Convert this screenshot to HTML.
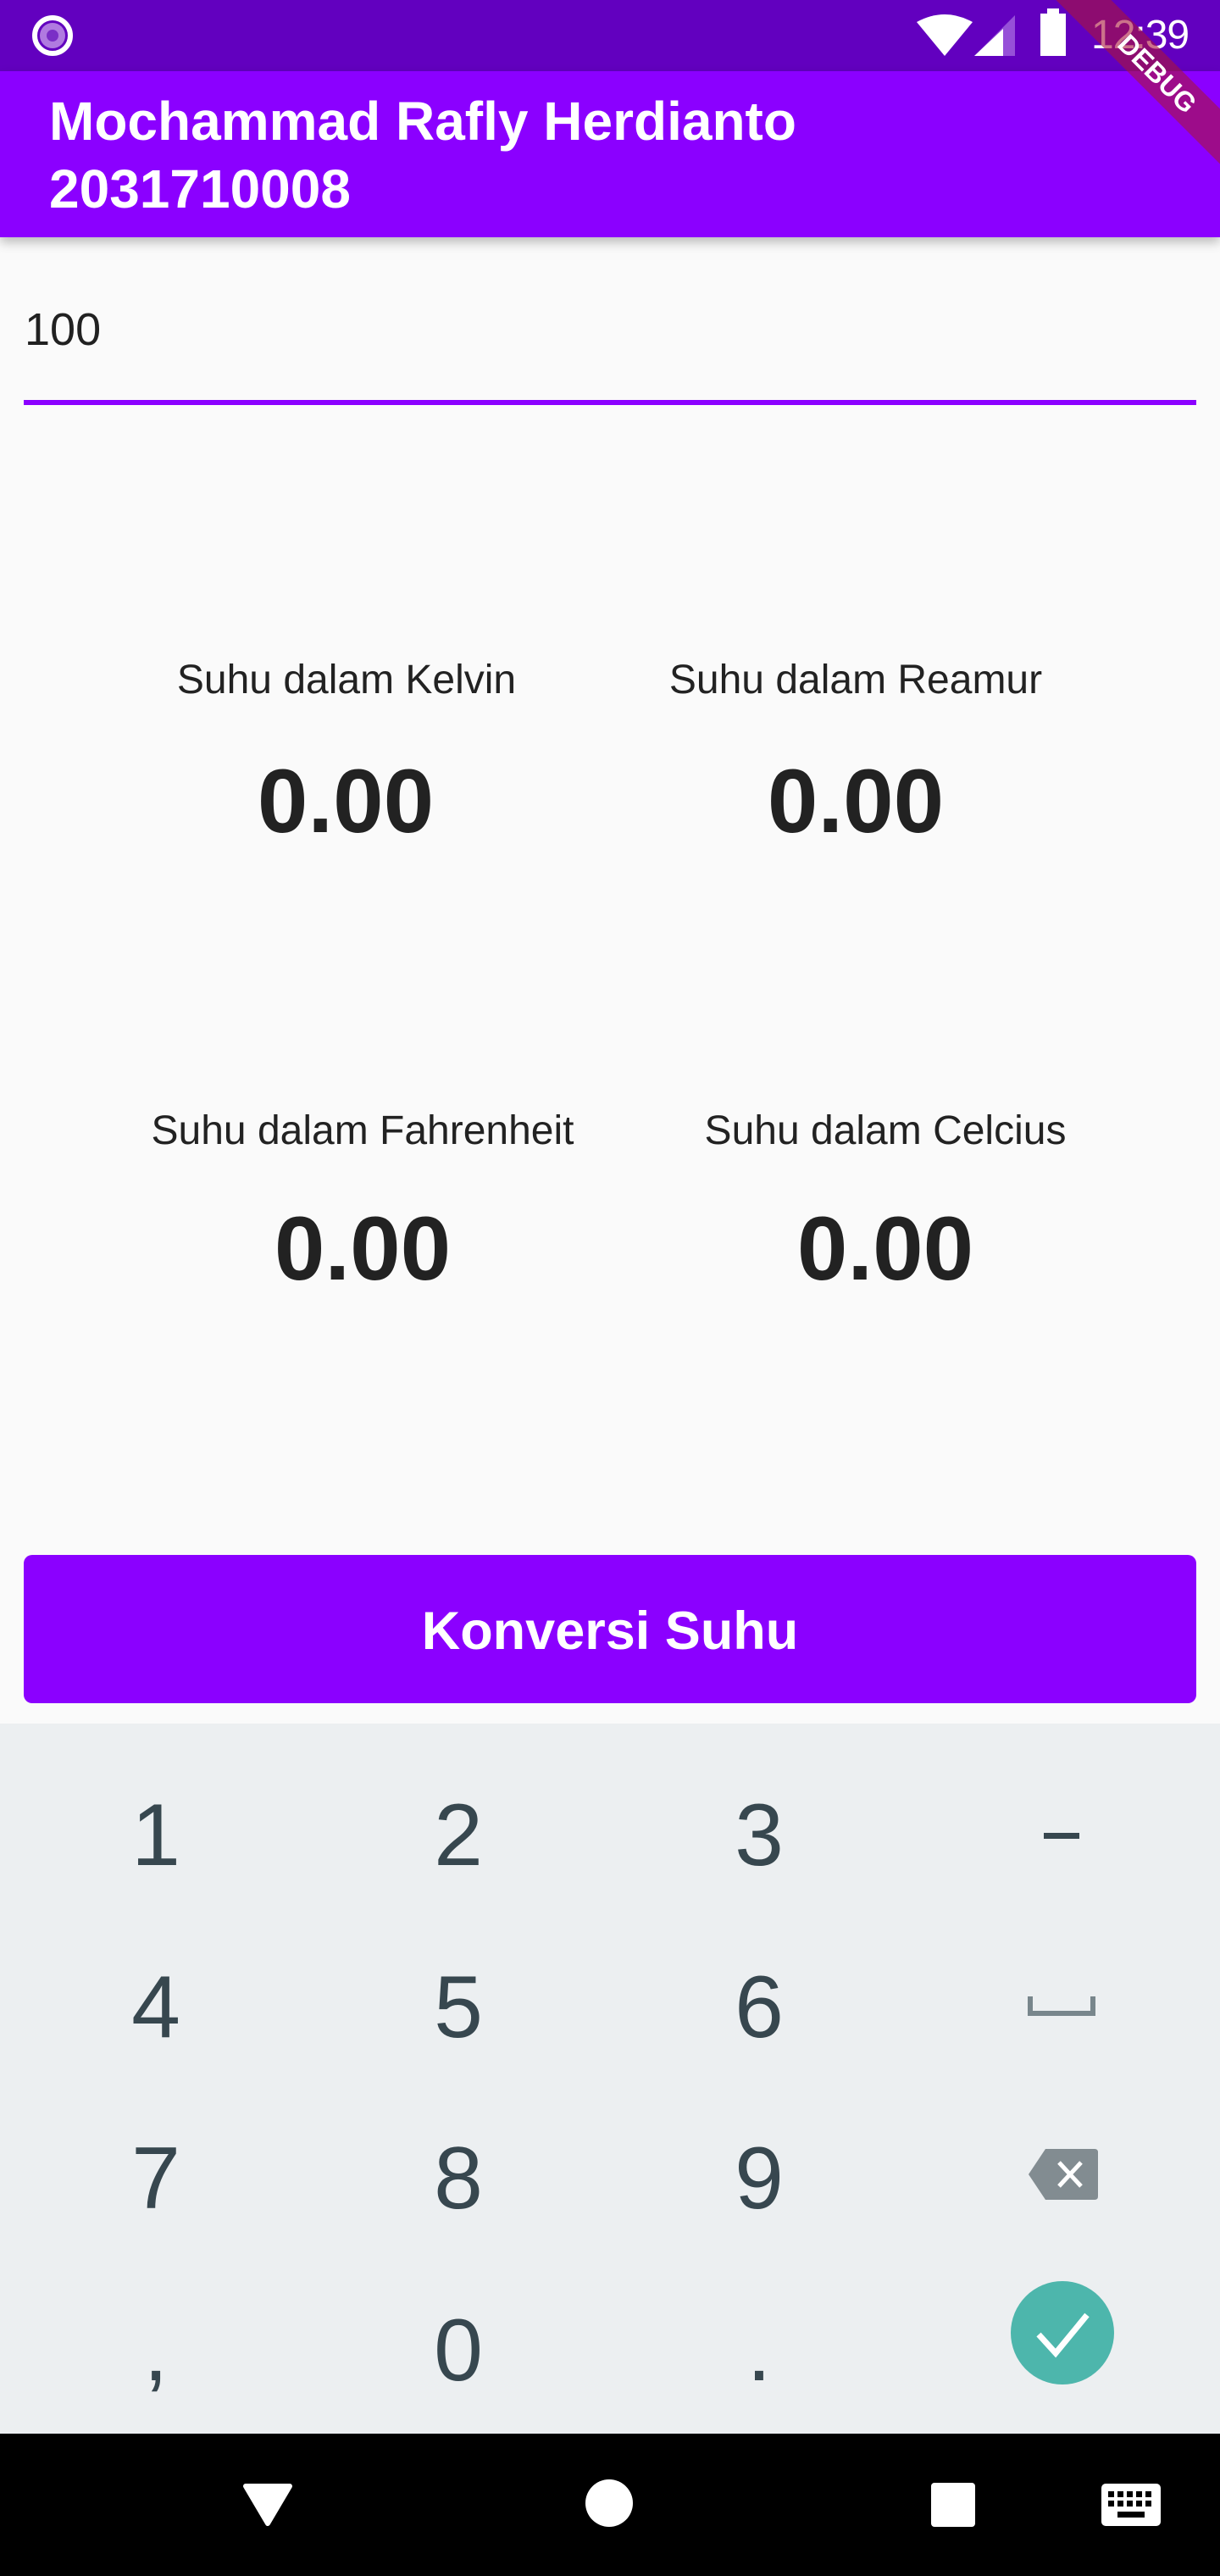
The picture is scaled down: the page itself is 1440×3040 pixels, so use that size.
<!DOCTYPE html>
<html><head><meta charset="utf-8"><style>
*{margin:0;padding:0;box-sizing:border-box}
body{width:1440px;height:3040px;background:#fafafa;position:relative;overflow:hidden;font-family:"Liberation Sans",sans-serif}
.a{position:absolute;white-space:nowrap}
.c{position:absolute;white-space:nowrap;text-align:center;transform:translateX(-50%)}
</style></head><body>
<!-- status bar -->
<div class="a" style="left:0;top:0;width:1440px;height:84px;background:#6200bf"></div>
<svg class="a" style="left:36px;top:16px" width="52" height="52"><circle cx="26" cy="26" r="21" fill="none" stroke="#fff" stroke-width="6"/><circle cx="26" cy="26" r="15" fill="#b07ae0"/><circle cx="26" cy="26" r="7" fill="#7a2fc6"/></svg>
<svg class="a" style="left:1080px;top:16px" width="70" height="52"><path d="M2 10 Q35 -8 68 10 L35 50 Z" fill="#fff"/></svg>
<svg class="a" style="left:1148px;top:16px" width="52" height="52"><path d="M50 2 L50 50 L2 50 Z" fill="#9650d8"/><path d="M36 18 L36 50 L2 50 Z" fill="#fff"/></svg>
<div class="a" style="left:1228px;top:16px;width:30px;height:50px;background:#fff"></div>
<div class="a" style="left:1236px;top:10px;width:14px;height:8px;background:#fff"></div>
<div class="a" style="left:1288px;top:14px;font-size:48px;color:#fff;line-height:56px;letter-spacing:-1px">12:39</div>
<!-- app bar -->
<div class="a" style="left:0;top:84px;width:1440px;height:196px;background:#8b00ff;box-shadow:0 6px 12px rgba(0,0,0,0.25)"></div>
<div class="a" style="left:58px;top:103px;font-size:64px;font-weight:bold;color:#fff;line-height:80px">Mochammad Rafly Herdianto</div>
<div class="a" style="left:58px;top:183px;font-size:64px;font-weight:bold;color:#fff;line-height:80px">2031710008</div>
<!-- debug banner -->
<div class="a" style="left:1206px;top:64px;width:320px;height:46px;background:rgba(170,20,60,0.6);transform:rotate(45deg);color:#fff;font-weight:bold;font-size:32px;line-height:46px;text-align:center">DEBUG</div>
<!-- input -->
<div class="a" style="left:29px;top:362px;font-size:54px;color:#212121;line-height:54px">100</div>
<div class="a" style="left:28px;top:472px;width:1384px;height:6px;background:#8b00ff"></div>
<!-- results -->
<div class="c" style="left:409px;top:780px;font-size:48px;color:#222;line-height:46px">Suhu dalam Kelvin</div>
<div class="c" style="left:1010px;top:780px;font-size:48px;color:#222;line-height:46px">Suhu dalam Reamur</div>
<div class="c" style="left:408px;top:892px;font-size:107px;font-weight:bold;color:#222;line-height:107px">0.00</div>
<div class="c" style="left:1010px;top:892px;font-size:107px;font-weight:bold;color:#222;line-height:107px">0.00</div>
<div class="c" style="left:428px;top:1312px;font-size:48px;color:#222;line-height:46px">Suhu dalam Fahrenheit</div>
<div class="c" style="left:1045px;top:1312px;font-size:48px;color:#222;line-height:46px">Suhu dalam Celcius</div>
<div class="c" style="left:428px;top:1420px;font-size:107px;font-weight:bold;color:#222;line-height:107px">0.00</div>
<div class="c" style="left:1045px;top:1420px;font-size:107px;font-weight:bold;color:#222;line-height:107px">0.00</div>
<!-- button -->
<div class="a" style="left:28px;top:1835px;width:1384px;height:175px;background:#8b00ff;border-radius:10px;color:#fff;font-size:63px;font-weight:bold;line-height:180px;text-align:center">Konversi Suhu</div>
<!-- keyboard -->
<div class="a" style="left:0;top:2034px;width:1440px;height:838px;background:#eceff1"></div>
<div class="c" style="left:184px;top:2114px;font-size:104px;color:#37474f;line-height:104px">1</div>
<div class="c" style="left:541px;top:2114px;font-size:104px;color:#37474f;line-height:104px">2</div>
<div class="c" style="left:896px;top:2114px;font-size:104px;color:#37474f;line-height:104px">3</div>
<div class="a" style="left:1232px;top:2163px;width:42px;height:7px;background:#37474f"></div>
<div class="c" style="left:184px;top:2317px;font-size:104px;color:#37474f;line-height:104px">4</div>
<div class="c" style="left:541px;top:2317px;font-size:104px;color:#37474f;line-height:104px">5</div>
<div class="c" style="left:896px;top:2317px;font-size:104px;color:#37474f;line-height:104px">6</div>
<svg class="a" style="left:1213px;top:2354px" width="80" height="26"><path d="M3 2 V22 H77 V2" fill="none" stroke="#78868c" stroke-width="6"/></svg>
<div class="c" style="left:184px;top:2519px;font-size:104px;color:#37474f;line-height:104px">7</div>
<div class="c" style="left:541px;top:2519px;font-size:104px;color:#37474f;line-height:104px">8</div>
<div class="c" style="left:896px;top:2519px;font-size:104px;color:#37474f;line-height:104px">9</div>
<svg class="a" style="left:1212px;top:2534px" width="84" height="64"><path d="M22 2 H80 Q84 2 84 6 V58 Q84 62 80 62 H22 L2 32 Z" fill="#828c91"/><path d="M38 18 L64 46 M64 18 L38 46" stroke="#fff" stroke-width="5"/></svg>
<div class="c" style="left:184px;top:2722px;font-size:104px;color:#37474f;line-height:104px">,</div>
<div class="c" style="left:541px;top:2722px;font-size:104px;color:#37474f;line-height:104px">0</div>
<div class="c" style="left:896px;top:2722px;font-size:104px;color:#37474f;line-height:104px">.</div>
<svg class="a" style="left:1193px;top:2692px" width="122" height="122"><circle cx="61" cy="61" r="61" fill="#4db6ac"/><path d="M33 63 L53 85 L90 40" fill="none" stroke="#fff" stroke-width="7"/></svg>
<!-- nav bar -->
<div class="a" style="left:0;top:2872px;width:1440px;height:168px;background:#000"></div>
<svg class="a" style="left:286px;top:2930px" width="60" height="52"><path d="M4 4 H56 L30 48 Z" fill="#fff" stroke="#fff" stroke-width="6" stroke-linejoin="round"/></svg>
<div class="a" style="left:691px;top:2926px;width:56px;height:56px;border-radius:50%;background:#fff"></div>
<div class="a" style="left:1099px;top:2930px;width:52px;height:52px;border-radius:4px;background:#fff"></div>
<svg class="a" style="left:1300px;top:2931px" width="70" height="50"><rect x="0" y="0" width="70" height="50" rx="5" fill="#fff"/><g fill="#000"><rect x="8" y="9" width="7" height="7"/><rect x="19" y="9" width="7" height="7"/><rect x="30" y="9" width="7" height="7"/><rect x="41" y="9" width="7" height="7"/><rect x="52" y="9" width="7" height="7"/><rect x="8" y="20" width="7" height="7"/><rect x="19" y="20" width="7" height="7"/><rect x="30" y="20" width="7" height="7"/><rect x="41" y="20" width="7" height="7"/><rect x="52" y="20" width="7" height="7"/><rect x="19" y="33" width="32" height="7"/></g></svg>
</body></html>
